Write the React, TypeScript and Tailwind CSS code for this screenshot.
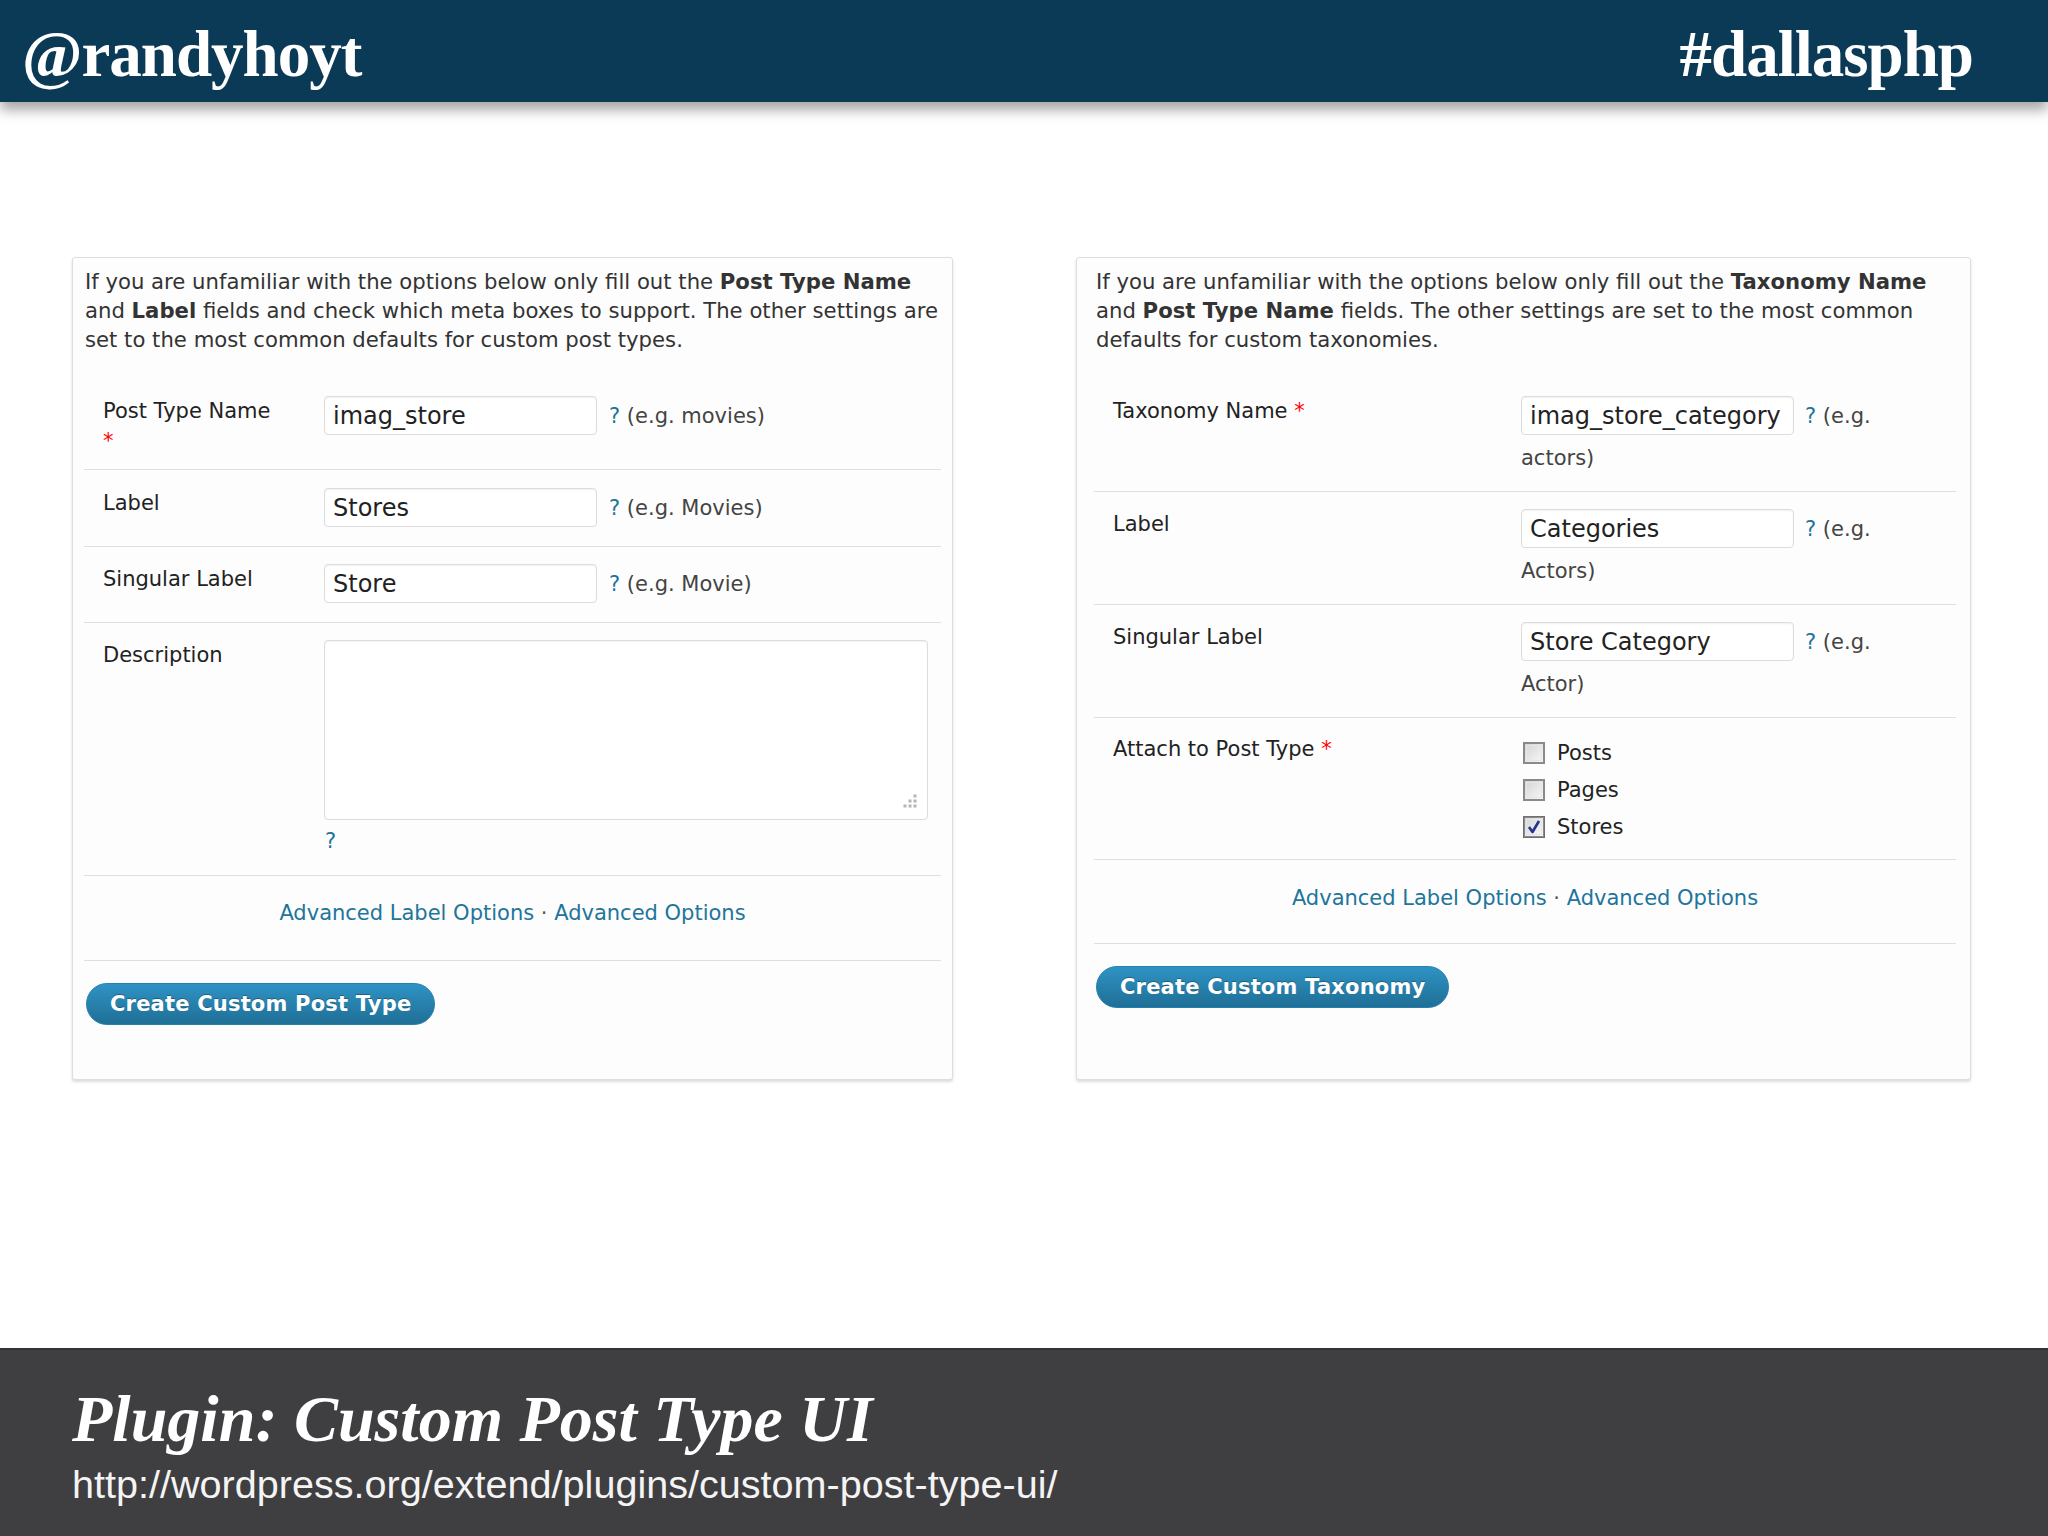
import React from 'react';

const ui = { fontFamily: '"DejaVu Sans", Verdana, sans-serif' };

const Field = ({ value }: { value: string }) => (
  <div className="flex h-[39px] w-[273px] shrink-0 items-center rounded-[4px] border border-[#dcdcdc] bg-white pl-[8px] text-[24px] text-[#222] shadow-[inset_0_1px_2px_rgba(0,0,0,0.06)]">
    {value}
  </div>
);

const Hint = ({ children }: { children: React.ReactNode }) => (
  <span className="text-[21px] text-[#444]">
    <span className="text-[#21759b]">?</span> {children}
  </span>
);

const Star = () => <span className="text-[#f00]">*</span>;

const Check = ({ checked }: { checked?: boolean }) => (
  <svg width="22" height="22" viewBox="0 0 22 22" className="shrink-0">
    <defs>
      <linearGradient id="cbg" x1="0" y1="0" x2="1" y2="1">
        <stop offset="0" stopColor="#d2d2d2" />
        <stop offset="1" stopColor="#fafafa" />
      </linearGradient>
    </defs>
    <rect x="1" y="1" width="20" height="20" fill="url(#cbg)" stroke="#8a8a8a" strokeWidth="2" />
    <rect x="3.5" y="3.5" width="15" height="15" fill="none" stroke="#e6e6e6" strokeWidth="1" />
    {checked && (
      <>
        <rect x="0.5" y="0.5" width="21" height="21" fill="none" stroke="#555" strokeWidth="1" strokeDasharray="1 1" />
        <path d="M6 11 L9.5 16 L16 5" fill="none" stroke="#27328f" strokeWidth="2.6" strokeLinejoin="round" />
      </>
    )}
  </svg>
);

const Links = () => (
  <div className="text-center text-[21px] leading-[30px]">
    <span className="text-[#21759b]">Advanced Label Options</span>
    <span className="text-[#555]"> · </span>
    <span className="text-[#21759b]">Advanced Options</span>
  </div>
);

const Button = ({ label }: { label: string }) => (
  <div className="inline-flex h-[42px] items-center rounded-full border border-[#2381b0] bg-gradient-to-b from-[#2f93c4] to-[#1f6f96] px-[23px] text-[21px] font-bold tracking-[0.2px] text-white [text-shadow:0_-1px_0_rgba(0,0,0,0.3)]">
    {label}
  </div>
);

const Grip = () => (
  <svg width="16" height="16" viewBox="0 0 16 16" className="absolute bottom-[9px] right-[9px]">
    {[
      [13, 2],
      [8, 7],
      [13, 7],
      [3, 12],
      [8, 12],
      [13, 12],
    ].map(([x, y], i) => (
      <rect key={i} x={x - 1.5} y={y - 1.5} width="3" height="3" fill="#b5b5b5" />
    ))}
  </svg>
);

const Divider = () => <div className="h-px bg-[#dfdfdf]" />;

function PostTypePanel() {
  return (
    <div className="h-[823px] w-[881px] rounded-[3px] border border-[#dedede] bg-[#fdfdfd] shadow-[0_2px_3px_rgba(0,0,0,0.14)]">
      <p className="pl-[12px] pr-[6px] pt-[9px] text-[21.2px] leading-[29px] text-[#333]">
        If you are unfamiliar with the options below only fill out the <b>Post Type Name</b> and <b>Label</b> fields and
        check which meta boxes to support. The other settings are set to the most common defaults for custom post types.
      </p>
      <div className="mx-[11px] mt-[26px] text-[21px] leading-[30px] text-[#222]">
        <div className="flex pb-[13px] pt-[16px]">
          <div className="w-[240px] shrink-0 pl-[19px]">
            Post Type Name
            <br />
            <Star />
          </div>
          <div className="flex items-center gap-[12px] self-start">
            <Field value="imag_store" />
            <Hint>(e.g. movies)</Hint>
          </div>
        </div>
        <Divider />
        <div className="flex pb-[19px] pt-[18px]">
          <div className="w-[240px] shrink-0 pl-[19px]">Label</div>
          <div className="flex items-center gap-[12px]">
            <Field value="Stores" />
            <Hint>(e.g. Movies)</Hint>
          </div>
        </div>
        <Divider />
        <div className="flex pb-[19px] pt-[17px]">
          <div className="w-[240px] shrink-0 pl-[19px]">Singular Label</div>
          <div className="flex items-center gap-[12px]">
            <Field value="Store" />
            <Hint>(e.g. Movie)</Hint>
          </div>
        </div>
        <Divider />
        <div className="flex pb-[19px] pt-[17px]">
          <div className="w-[240px] shrink-0 pl-[19px]">Description</div>
          <div className="flex-1 pr-[13px]">
            <div className="relative h-[180px] rounded-[4px] border border-[#dcdcdc] bg-white shadow-[inset_0_1px_2px_rgba(0,0,0,0.05)]">
              <Grip />
            </div>
            <div className="mt-[6px] pl-[1px] text-[#21759b]">?</div>
          </div>
        </div>
        <Divider />
        <div className="pb-[32px] pt-[22px]">
          <Links />
        </div>
        <Divider />
        <div className="pl-[2px] pt-[22px]">
          <Button label="Create Custom Post Type" />
        </div>
      </div>
    </div>
  );
}

function TaxonomyPanel() {
  const rows: [string, string, string][] = [
    ['Label', 'Categories', 'Actors)'],
    ['Singular Label', 'Store Category', 'Actor)'],
  ];
  return (
    <div className="h-[823px] w-[895px] rounded-[3px] border border-[#dedede] bg-[#fdfdfd] shadow-[0_2px_3px_rgba(0,0,0,0.14)]">
      <p className="pl-[19px] pr-[12px] pt-[9px] text-[21.2px] leading-[29px] text-[#333]">
        If you are unfamiliar with the options below only fill out the <b>Taxonomy Name</b> and <b>Post Type Name</b>{' '}
        fields. The other settings are set to the most common defaults for custom taxonomies.
      </p>
      <div className="ml-[17px] mr-[14px] mt-[26px] text-[21px] leading-[30px] text-[#222]">
        <div className="flex pb-[18px] pt-[16px]">
          <div className="w-[427px] shrink-0 pl-[19px]">
            Taxonomy Name <Star />
          </div>
          <div>
            <div className="flex items-center gap-[11px]">
              <Field value="imag_store_category" />
              <Hint>(e.g.</Hint>
            </div>
            <div className="mt-[8px] text-[#444]">actors)</div>
          </div>
        </div>
        {rows.map(([label, value, rest]) => (
          <React.Fragment key={label}>
            <Divider />
            <div className="flex pb-[18px] pt-[17px]">
              <div className="w-[427px] shrink-0 pl-[19px]">{label}</div>
              <div>
                <div className="flex items-center gap-[11px]">
                  <Field value={value} />
                  <Hint>(e.g.</Hint>
                </div>
                <div className="mt-[8px] text-[#444]">{rest}</div>
              </div>
            </div>
          </React.Fragment>
        ))}
        <Divider />
        <div className="flex pb-[14px] pt-[16px]">
          <div className="w-[427px] shrink-0 pl-[19px]">
            Attach to Post Type <Star />
          </div>
          <div className="pl-[2px]">
            {['Posts', 'Pages', 'Stores'].map((name) => (
              <div key={name} className="flex h-[37px] items-center gap-[12px]">
                <Check checked={name === 'Stores'} />
                <span>{name}</span>
              </div>
            ))}
          </div>
        </div>
        <Divider />
        <div className="pb-[30px] pt-[23px]">
          <Links />
        </div>
        <Divider />
        <div className="pl-[2px] pt-[22px]">
          <Button label="Create Custom Taxonomy" />
        </div>
      </div>
    </div>
  );
}

export default function App() {
  return (
    <div className="flex h-[1536px] w-[2048px] flex-col overflow-hidden bg-white" style={ui}>
      <header
        className="relative z-10 flex h-[102px] shrink-0 items-start justify-between bg-[#0b3a57] pl-[22px] pr-[75px] text-[65px] font-bold leading-[108px] tracking-[-1px] text-white shadow-[0_8px_12px_rgba(0,0,0,0.35)]"
        style={{ fontFamily: '"Liberation Serif", "Times New Roman", serif' }}
      >
        <span>@randyhoyt</span>
        <span>#dallasphp</span>
      </header>
      <main className="flex flex-1 items-start gap-[123px] pl-[72px] pt-[155px]">
        <PostTypePanel />
        <TaxonomyPanel />
      </main>
      <footer className="h-[188px] shrink-0 border-t-2 border-[#333235] bg-[#3f3e41] pl-[72px] pt-[36px] text-white">
        <div
          className="text-[66px] font-bold italic leading-[66px]"
          style={{ fontFamily: '"Liberation Serif", "Times New Roman", serif' }}
        >
          Plugin: Custom Post Type UI
        </div>
        <div
          className="mt-[12px] text-[39.6px] leading-[40px] text-[#f4f4f4]"
          style={{ fontFamily: '"Liberation Sans", Arial, sans-serif' }}
        >
          http://wordpress.org/extend/plugins/custom-post-type-ui/
        </div>
      </footer>
    </div>
  );
}
